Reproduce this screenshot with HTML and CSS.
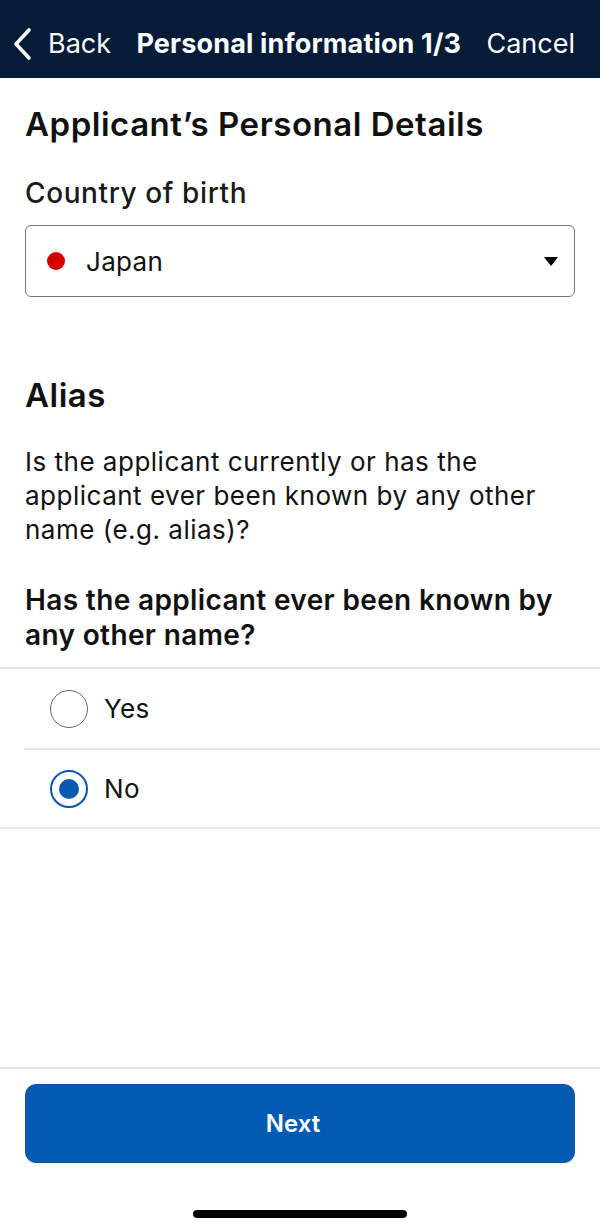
FILE: index.html
```html
<!DOCTYPE html>
<html lang="en">
<head>
<meta charset="utf-8">
<title>Personal information</title>
<link rel="stylesheet" href="styles.css">
</head>
<body>
<div class="app">
  <header class="navbar">
    <a class="nav-back" href="#">
      <svg class="chevron" width="22" height="34" viewBox="0 0 22 34" aria-hidden="true">
        <polyline points="17,3 4,17 17,31" fill="none" stroke="#ffffff" stroke-width="3.6" stroke-linecap="round" stroke-linejoin="round"/>
      </svg>
      <span>Back</span>
    </a>
    <h2 class="nav-title">Personal information 1/3</h2>
    <a class="nav-cancel" href="#">Cancel</a>
  </header>

  <main class="content">
    <h1 class="section-title">Applicant’s Personal Details</h1>
    <div class="field-label">Country of birth</div>
    <div class="select">
      <span class="flag-dot"></span>
      <span class="select-value">Japan</span>
      <span class="caret"></span>
    </div>

    <h1 class="section-title alias-title">Alias</h1>
    <p class="description">Is the applicant currently or has the applicant ever been known by any other name (e.g. alias)?</p>
    <div class="question">Has the applicant ever been known by any other name?</div>
  </main>

  <div class="radio-list">
    <label class="radio-row">
      <span class="radio"></span>
      <span class="radio-label">Yes</span>
    </label>
    <label class="radio-row">
      <span class="radio checked"></span>
      <span class="radio-label">No</span>
    </label>
  </div>

  <div class="spacer"></div>

  <footer class="footer">
    <button class="next-btn" type="button">Next</button>
    <div class="home-indicator"></div>
  </footer>
</div>
</body>
</html>
```

FILE: styles.css
```css
* { box-sizing: border-box; }
html, body {
  margin: 0;
  padding: 0;
  background: #ffffff;
}
body {
  font-family: Inter, "Noto Sans", "Liberation Sans", sans-serif;
  color: #111111;
}
.app {
  width: 600px;
  min-height: 1230px;
  display: flex;
  flex-direction: column;
}

/* Navbar */
.navbar {
  height: 78px;
  background: #061b38;
  display: flex;
  align-items: center;
  padding: 9px 25px 0 14px;
  color: #ffffff;
}
.nav-back {
  display: flex;
  align-items: center;
  gap: 14px;
  color: #ffffff;
  text-decoration: none;
  font-size: 27px;
  font-weight: 400;
}
.chevron { display: block; margin-left: -2px; }
.nav-title {
  flex: 1;
  margin: 0;
  text-align: center;
  font-size: 27px;
  font-weight: 700;
  letter-spacing: 0.15px;
  white-space: nowrap;
}
.nav-cancel {
  color: #ffffff;
  text-decoration: none;
  font-size: 27px;
  font-weight: 400;
}

/* Content */
.content {
  padding: 0 25px;
}
.section-title {
  margin: 27px 0 0;
  font-size: 33px;
  line-height: 38px;
  font-weight: 600;
  letter-spacing: 0.52px;
}
.field-label {
  margin-top: 33px;
  font-size: 28px;
  line-height: 34px;
  font-weight: 500;
  letter-spacing: 0.6px;
  color: #1a1a1a;
}
.select {
  margin-top: 15px;
  height: 72px;
  border: 1.5px solid #777777;
  border-radius: 6px;
  display: flex;
  align-items: center;
  padding: 0 16px 0 21px;
}
.flag-dot {
  width: 18px;
  height: 18px;
  border-radius: 50%;
  background: #d40000;
  flex: none;
}
.select-value {
  flex: 1;
  margin-left: 21px;
  font-size: 26px;
  letter-spacing: 0.3px;
  color: #111111;
}
.caret {
  width: 0;
  height: 0;
  border-left: 7px solid transparent;
  border-right: 7px solid transparent;
  border-top: 9px solid #000000;
}
.alias-title {
  margin-top: 79px;
}
.description {
  margin: 31px 0 0;
  font-size: 26px;
  line-height: 34px;
  font-weight: 400;
  letter-spacing: 0.5px;
  color: #111111;
}
.question {
  margin-top: 36px;
  font-size: 28px;
  line-height: 35px;
  font-weight: 600;
  letter-spacing: 0.36px;
  color: #111111;
}

/* Radio list */
.radio-list {
  margin-top: 14px;
  border-top: 2px solid #e4e4e4;
  border-bottom: 2px solid #e9e9e9;
}
.radio-row {
  height: 79px;
  display: flex;
  align-items: center;
  gap: 16px;
  margin-left: 24px;
  padding-left: 26px;
}
.radio-row + .radio-row {
  border-top: 2px solid #e4e4e4;
}
.radio {
  width: 38px;
  height: 38px;
  border-radius: 50%;
  border: 1.5px solid #666666;
  background: #ffffff;
  flex: none;
  display: flex;
  align-items: center;
  justify-content: center;
}
.radio.checked {
  border: 2px solid #0a56ad;
}
.radio.checked::after {
  content: "";
  width: 20px;
  height: 20px;
  border-radius: 50%;
  background: #0a58b1;
}
.radio-label {
  font-size: 26px;
  letter-spacing: 0.3px;
  color: #111111;
}

.spacer { flex: 1; }

/* Footer */
.footer {
  border-top: 2px solid #e6e6e6;
  padding: 15px 25px 0;
  height: 163px;
  display: flex;
  flex-direction: column;
  align-items: center;
}
.next-btn {
  width: 100%;
  height: 79px;
  border: 1px solid #0a51a3;
  border-radius: 11px;
  background: #035ab1;
  color: #ffffff;
  font-family: Inter, "Noto Sans", "Liberation Sans", sans-serif;
  font-size: 24px;
  font-weight: 600;
  padding: 0 14px 0 0;
}
.home-indicator {
  margin-top: 47px;
  width: 214px;
  height: 8px;
  border-radius: 4px;
  background: #000000;
}
```
